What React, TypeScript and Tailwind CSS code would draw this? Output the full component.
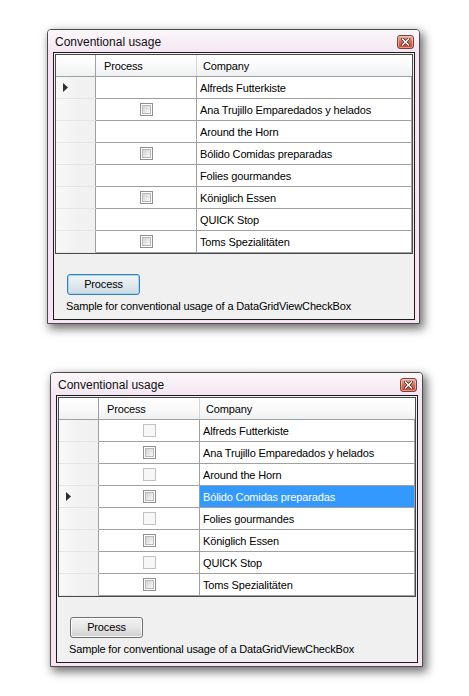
import React from "react";

const companies = [
  "Alfreds Futterkiste",
  "Ana Trujillo Emparedados y helados",
  "Around the Horn",
  "Bólido Comidas preparadas",
  "Folies gourmandes",
  "Königlich Essen",
  "QUICK Stop",
  "Toms Spezialitäten",
];

function CheckBox({ disabled }: { disabled?: boolean }) {
  if (disabled) {
    return (
      <div className="w-[13px] h-[13px] border border-[#c2c2c2] bg-[#f7f7f7]" />
    );
  }
  return (
    <div className="w-[13px] h-[13px] border border-[#8e8f8f] bg-white p-[1px]">
      <div className="w-[9px] h-[9px] border border-[#b8b8b8] bg-gradient-to-br from-[#d3d3d3] to-[#f8f8f8]" />
    </div>
  );
}

function Indicator() {
  return (
    <svg width="5" height="9" viewBox="0 0 5 9" className="block">
      <polygon points="0,0 5,4.5 0,9" fill="#2e2e2e" />
    </svg>
  );
}

function CloseButton() {
  return (
    <div className="w-[17px] h-[14px] rounded-[3px] border border-[#7a4040] bg-gradient-to-b from-[#eab1a4] via-[#d26c55] to-[#c9472f] flex items-center justify-center shadow-[inset_0_0_0_1px_rgba(255,220,210,0.5)]">
      <svg width="9" height="8" viewBox="0 0 9 8">
        <path d="M1.5 1 L7.5 7 M7.5 1 L1.5 7" stroke="#4a3030" strokeWidth="3" strokeLinecap="square" />
        <path d="M1.5 1 L7.5 7 M7.5 1 L1.5 7" stroke="#ffffff" strokeWidth="1.4" strokeLinecap="square" />
      </svg>
    </div>
  );
}

function Window({ second }: { second?: boolean }) {
  return (
    <div className="w-[373px] h-[295px] border border-[#4b4b4b] rounded-t-[4px] bg-[#f6e4f3] shadow-[3px_4px_10px_1px_rgba(0,0,0,0.55)] flex flex-col font-['Liberation_Sans',Arial,sans-serif] text-[11px] text-black">
      {/* Title bar */}
      <div className="h-[22px] shrink-0 flex items-center justify-between pl-[7px] pr-[5px] bg-gradient-to-b from-[#fcf7fb] to-[#f4e6f2] rounded-t-[3px]">
        <span className="text-[12px] leading-none pt-[2px] text-[#111]">Conventional usage</span>
        <div className="pt-[1px]">
          <CloseButton />
        </div>
      </div>
      {/* Client area */}
      <div className="ml-[5px] mr-[4px] mb-[3px] h-[268px] border border-[#1c1c1c] bg-[#f0f0f0] flex flex-col tracking-[-0.15px]">
        {/* Grid */}
        <div className="ml-[1px] mt-[1px] w-[358px] h-[200px] border border-[#4a4a4a] bg-white flex flex-col">
          {/* Header */}
          <div className="h-[22px] flex border-b border-[#a0a0a0] bg-gradient-to-b from-white via-[#fafafa] to-[#eef0f2]">
            <div className="w-[40px] border-r border-[#a0a0a0]" />
            <div className="w-[101px] border-r border-[#d5d5d5] flex items-center pl-[8px] pt-[1px]">
              Process
            </div>
            <div className="flex-1 flex items-center pl-[6px] pt-[1px]">Company</div>
          </div>
          {companies.map((c, i) => {
            const hasCheck = second || i % 2 === 1;
            const disabled = second && i % 2 === 0;
            const current = second ? i === 3 : i === 0;
            const selected = second && i === 3;
            return (
              <div key={c} className="h-[22px] flex">
                <div className="w-[40px] border-r border-[#a0a0a0] border-b border-b-[#e6e6e6] bg-gradient-to-r from-[#f9f9f9] via-[#f2f2f2] to-[#f1f1f1] flex items-center pl-[7px]">
                  {current && <Indicator />}
                </div>
                <div className="w-[101px] border-r border-b border-[#a0a0a0] flex items-center justify-center">
                  {hasCheck && <CheckBox disabled={disabled} />}
                </div>
                <div
                  className={`flex-1 border-r border-b border-[#a0a0a0] flex items-center pl-[3px] pt-[1px] ${
                    selected ? "bg-[#3399ff] text-white" : ""
                  }`}
                >
                  {c}
                </div>
              </div>
            );
          })}
        </div>
        {/* Button */}
        <div className="ml-[13px] mt-[20px]">
          {second ? (
            <button className="w-[73px] h-[21px] rounded-[3px] border border-[#707070] bg-gradient-to-b from-[#f2f2f2] via-[#e6e6e6] to-[#d0d0d0] shadow-[inset_0_0_0_1px_rgba(255,255,255,0.8)] flex items-center justify-center leading-none">
              Process
            </button>
          ) : (
            <button className="w-[73px] h-[21px] rounded-[3px] border border-[#3c7fb1] bg-gradient-to-b from-[#f0f5f8] via-[#e2eaf0] to-[#cfd9e0] shadow-[inset_0_0_0_1px_#9fd8f5] flex items-center justify-center leading-none">
              Process
            </button>
          )}
        </div>
        <div className="ml-[12px] mt-[5px] leading-[13px]">
          Sample for conventional usage of a DataGridViewCheckBox
        </div>
      </div>
    </div>
  );
}

export default function App() {
  return (
    <div className="w-[469px] h-[696px] bg-white overflow-hidden">
      <div className="pt-[29px] pl-[47px]">
        <Window />
      </div>
      <div className="pt-[48px] pl-[50px]">
        <Window second />
      </div>
    </div>
  );
}
